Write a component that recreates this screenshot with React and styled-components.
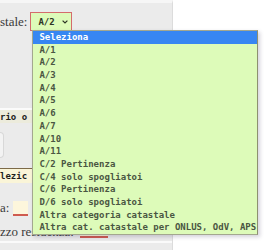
import React from 'react'
import styled, { createGlobalStyle } from 'styled-components'

const GlobalStyle = createGlobalStyle`
  html, body {
    margin: 0;
    padding: 0;
    background: #fff;
  }
  body {
    width: 266px;
    height: 250px;
    overflow: hidden;
  }
`

const options = [
  'Seleziona',
  'A/1',
  'A/2',
  'A/3',
  'A/4',
  'A/5',
  'A/6',
  'A/7',
  'A/10',
  'A/11',
  'C/2 Pertinenza',
  'C/4 solo spogliatoi',
  'C/6 Pertinenza',
  'D/6 solo spogliatoi',
  'Altra categoria catastale',
  'Altra cat. catastale per ONLUS, OdV, APS'
]

const Panel = styled.div`
  width: 173px;
  height: 250px;
  box-sizing: border-box;
  background: #ebebeb;
  border-top: 3px solid #f6f6f6;
  border-right: 1px solid #dcdcdc;
  display: flex;
  flex-direction: column;
`

const FieldRow = styled.div`
  display: flex;
  align-items: center;
  gap: ${p => p.gap || 3}px;
  height: ${p => p.h}px;
  margin-top: ${p => p.top || 0}px;
  font-family: 'Liberation Serif', serif;
  font-size: 13px;
  color: #3a3a3a;
  position: relative;
`

const Label = styled.span`
  white-space: nowrap;
`

const SelectBox = styled.div`
  position: relative;
  width: 42px;
  height: 19px;
  box-sizing: border-box;
  border: 1px solid #d46c6c;
  background: #ddfbb9;
  display: flex;
  align-items: center;
  padding-left: 7px;
  gap: 7px;
  font-family: 'DejaVu Sans Mono', monospace;
  font-weight: bold;
  font-size: 9px;
  color: #2c3424;
`

const Chevron = styled.svg`
  width: 6px;
  height: 4px;
`

const List = styled.ul`
  position: absolute;
  left: 1px;
  top: 17px;
  width: 226px;
  margin: 0;
  padding: 0;
  list-style: none;
  box-sizing: border-box;
  border: 1px solid #a3a78f;
  border-right-color: #8d9070;
  background: #ddfbb9;
  box-shadow: 2px 2px 4px rgba(60, 50, 90, 0.22);
  z-index: 5;
`

const Option = styled.li`
  height: 12.7px;
  line-height: 12.7px;
  padding-left: 6px;
  font-family: 'DejaVu Sans Mono', monospace;
  font-size: 9px;
  white-space: nowrap;
  color: ${p => (p.active ? '#fff' : '#4a5642')};
  background: ${p => (p.active ? '#3786f2' : 'transparent')};
`

const Header = styled.div`
  height: 15px;
  margin-top: ${p => p.top}px;
  box-sizing: border-box;
  border-top: ${p => p.line};
  background: ${p => p.bg};
  display: flex;
  align-items: center;
  font-family: 'DejaVu Sans Mono', monospace;
  font-weight: bold;
  font-size: 9px;
  color: #1e1e1e;
`

const Card = styled.div`
  width: 3px;
  height: 24px;
  margin-top: 9px;
  background: #f3f3f3;
  border: 1px solid #d8d8d8;
  border-left: none;
  border-radius: 0 4px 4px 0;
`

const Input = styled.div`
  width: ${p => p.w}px;
  height: ${p => p.h}px;
  box-sizing: border-box;
  background: #fdf6dc;
  border-bottom: 2px solid #cf5b4f;
`

const Divider = styled.div`
  height: 2px;
  margin-top: 1px;
  background: #fafafa;
`

export default function App() {
  return (
    <>
      <GlobalStyle />
      <Panel>
        <FieldRow h={19} top={9}>
          <Label>stale:</Label>
          <SelectBox>
            A/2
            <Chevron viewBox="0 0 6 4">
              <path d="M0.6 0.6 L3 3 L5.4 0.6" fill="none" stroke="#2c3424" strokeWidth="1.2" />
            </Chevron>
            <List>
              {options.map((o, i) => (
                <Option key={o} active={i === 0}>{o}</Option>
              ))}
            </List>
          </SelectBox>
        </FieldRow>
        <Header top={77} line="2px solid #fbfbfb" bg="#ecebdc">rio o</Header>
        <Card />
        <Header top={10} line="1px solid #7d6a48" bg="#faf5d8">lezic</Header>
        <FieldRow h={18} top={16} gap={4}>
          <Label>a:</Label>
          <Input w={15} h={15} />
        </FieldRow>
        <FieldRow h={16} top={7} gap={6}>
          <Label>zzo residenza:</Label>
          <Input w={28} h={11} />
        </FieldRow>
        <Divider />
      </Panel>
    </>
  )
}
